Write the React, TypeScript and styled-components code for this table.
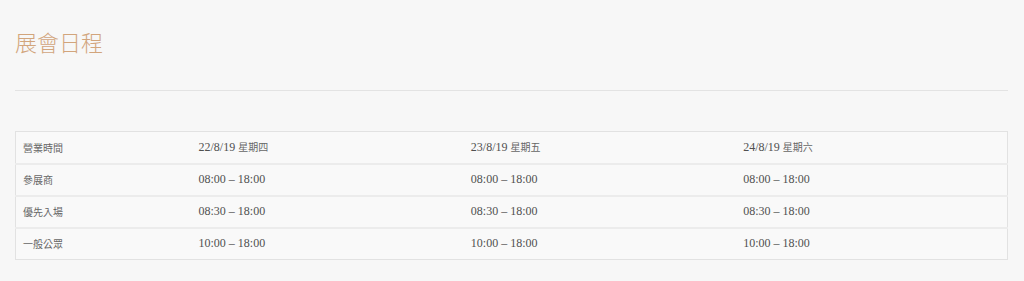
import React from 'react';
import styled, { createGlobalStyle } from 'styled-components';

const GlobalStyle = createGlobalStyle`
  html, body {
    margin: 0;
    padding: 0;
    background: #f7f7f7;
  }
`;

const Page = styled.div`
  padding: 0 16px 0 15px;
  height: 281px;
  box-sizing: border-box;
`;

const Title = styled.h2`
  margin: 0;
  padding-top: 26px;
  height: 91px;
  box-sizing: border-box;
  font-family: "Noto Sans CJK TC", "Noto Sans", sans-serif;
  font-size: 22px;
  font-weight: 300;
  line-height: 30px;
  color: #d2a57c;
  border-bottom: 1px solid #e3e3e3;
`;

const Table = styled.table`
  margin-top: 40px;
  width: 100%;
  border-collapse: collapse;
  table-layout: fixed;
  border: 1px solid #e2e2e2;
  background: #f9f9f9;
`;

const Row = styled.tr`
  & + & td {
    border-top: 2px solid #ececec;
  }
`;

const Cell = styled.td<{ $label?: boolean }>`
  padding: 0 ${p => (p.$label ? '7px' : '8px')};
  height: 32px;
  box-sizing: border-box;
  vertical-align: middle;
  font-family: ${p => (p.$label ? '"Noto Sans CJK TC", sans-serif' : '"Liberation Serif", "Noto Sans CJK TC", serif')};
  font-size: ${p => (p.$label ? '10px' : '12px')};
  color: ${p => (p.$label ? '#666' : '#505050')};
  white-space: nowrap;
`;

const Weekday = styled.span`
  font-family: "Noto Sans CJK TC", sans-serif;
  font-size: 10px;
  color: #666;
`;

const days = [
  { date: '22/8/19', week: '星期四' },
  { date: '23/8/19', week: '星期五' },
  { date: '24/8/19', week: '星期六' },
];

const rows = [
  { label: '參展商', times: ['08:00 – 18:00', '08:00 – 18:00', '08:00 – 18:00'] },
  { label: '優先入場', times: ['08:30 – 18:00', '08:30 – 18:00', '08:30 – 18:00'] },
  { label: '一般公眾', times: ['10:00 – 18:00', '10:00 – 18:00', '10:00 – 18:00'] },
];

const App: React.FC = () => {
  return (
    <>
      <GlobalStyle />
      <Page>
        <Title>展會日程</Title>
        <Table>
          <colgroup>
            <col style={{ width: 175 }} />
            <col />
            <col />
            <col />
          </colgroup>
          <tbody>
            <Row>
              <Cell $label>營業時間</Cell>
              {days.map(d => (
                <Cell key={d.date}>
                  {d.date} <Weekday>{d.week}</Weekday>
                </Cell>
              ))}
            </Row>
            {rows.map(r => (
              <Row key={r.label}>
                <Cell $label>{r.label}</Cell>
                {r.times.map((t, i) => (
                  <Cell key={i}>{t}</Cell>
                ))}
              </Row>
            ))}
          </tbody>
        </Table>
      </Page>
    </>
  );
};

export default App;
